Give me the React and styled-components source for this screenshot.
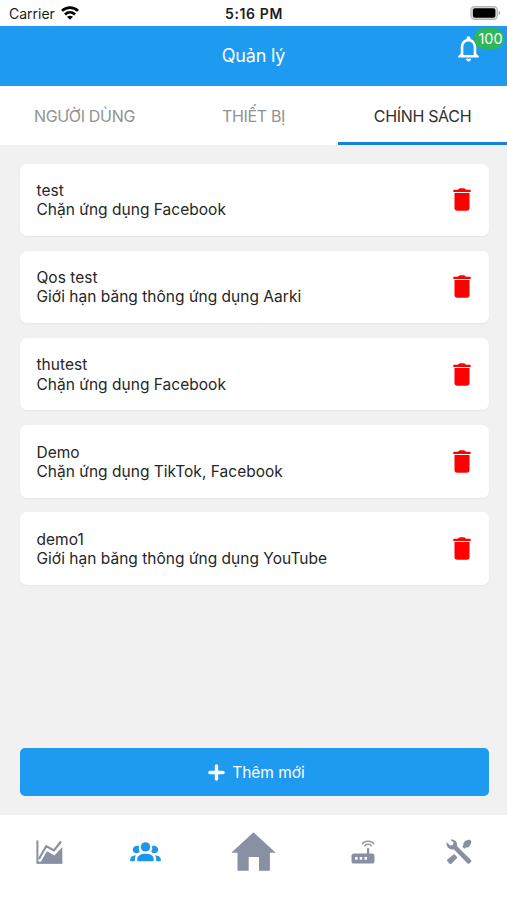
import React, { useState } from 'react';
import styled, { createGlobalStyle } from 'styled-components';
import { MdNotificationsNone } from 'react-icons/md';

const tabs = ['NGƯỜI DÙNG', 'THIẾT BỊ', 'CHÍNH SÁCH'];

const policies = [
    { name: 'test', detail: 'Chặn ứng dụng Facebook' },
    { name: 'Qos test', detail: 'Giới hạn băng thông ứng dụng Aarki' },
    { name: 'thutest', detail: 'Chặn ứng dụng Facebook' },
    { name: 'Demo', detail: 'Chặn ứng dụng TikTok, Facebook' },
    { name: 'demo1', detail: 'Giới hạn băng thông ứng dụng YouTube' },
];

const WifiIcon = () => (
    <svg width="18" height="14" viewBox="0 0 18 14" fill="none" stroke="#000" strokeWidth="2.7">
        <path d="M1 4.9C5.4.6 12.6.6 17 4.9" />
        <path d="M4 8.4c2.9-2.7 7.1-2.7 10 0" />
        <path d="M9 13.8 6 10.8c1.7-1.5 4.3-1.5 6 0z" fill="#000" stroke="none" />
    </svg>
);

const BatteryIcon = () => (
    <svg width="31" height="14" viewBox="0 0 31 14">
        <rect x=".9" y=".6" width="26.5" height="12.8" rx="3.6" fill="#ddd" stroke="#b5b5b5" strokeWidth="1.1" />
        <rect x="2.9" y="2.3" width="22.5" height="9.4" rx="2" fill="#000" />
        <path d="M28.7 4.8c2 .7 2 3.7 0 4.4z" fill="#a5a5a5" />
    </svg>
);

const TrashIcon = () => (
    <svg width="18" height="23" viewBox="0 0 18 23" fill="#fe0000">
        <path d="M.3 2.4Q.3 1.7 1 1.7h3.9Q6.2.3 7.8.3h2.4q1.6 0 2.9 1.4H17q.7 0 .7.7v1.7H.3z" />
        <path d="M1.5 5h15v15.3q0 2.4-2.4 2.4H3.9q-2.4 0-2.4-2.4z" />
    </svg>
);

const PlusIcon = () => (
    <svg width="17" height="17" viewBox="0 0 17 17" stroke="#fff" strokeWidth="3.4" strokeLinecap="round">
        <path d="M8.5 1.9v13.2M1.9 8.5h13.2" />
    </svg>
);

const ChartIcon = () => (
    <svg width="27" height="24" viewBox="0 0 27 24">
        <path d="M4.4 21.6 10.7 11l7.7 4.4L26.3 7v16.4H1z" fill="currentColor" />
        <path d="M1.4.5v22.3h24.9" fill="none" stroke="currentColor" strokeWidth="2" />
        <path d="m3 19 7.3-12.7 7.7 4.1L25 1.5" fill="none" stroke="currentColor" strokeWidth="2.3" />
        <path d="m4.1 21.2 6.6-11.7 7.6 4.1L26.3 4.8" fill="none" stroke="#fff" strokeWidth="1.8" />
    </svg>
);

const UsersIcon = () => (
    <svg width="31" height="20" viewBox="0 0 31 20" fill="currentColor">
        <circle cx="15.5" cy="4.9" r="4.7" />
        <path d="M7.3 19.2v-2.4c0-3 3.3-5.1 8.2-5.1s8.2 2.1 8.2 5.1v2.4z" />
        <path d="M9 3.9C6 3 2.7 4.9 2.7 7.5c0 2.2 1.7 3.7 3.8 3.7 1.4 0 2.5-.6 3.2-1.5A7.2 7.2 0 0 1 9 3.9z" />
        <path d="M22 3.9c3-.9 6.3 1 6.3 3.6 0 2.2-1.7 3.7-3.8 3.7-1.4 0-2.5-.6-3.2-1.5A7.2 7.2 0 0 0 22 3.9z" />
        <path d="M5.9 13.2c-3.4.3-5.7 2-5.7 4v2h4.7v-2.5c0-1.3.3-2.5 1-3.5zM25.1 13.2c3.4.3 5.7 2 5.7 4v2h-4.7v-2.5c0-1.3-.3-2.5-1-3.5z" />
    </svg>
);

const HomeIcon = () => (
    <svg width="45" height="39" viewBox="0 0 45 39" fill="currentColor">
        <path d="M22.5.3 44.7 20.7h-5.8v18H28V24.9H17.7v13.8H6.5v-18H.3z" />
    </svg>
);

const RouterIcon = () => (
    <svg width="24" height="24" viewBox="0 0 24 24">
        <path
            d="M16 8.2h2.2v5.2h2.7q2.6 0 2.6 2.6v4.9q0 2.6-2.6 2.6H3.1Q.5 23.5.5 20.9V16q0-2.6 2.6-2.6H16z"
            fill="currentColor"
        />
        <path d="M4 17.1h2.6v2.7H4zM8.7 17.1h2.6v2.7H8.7zM13.4 17.1H16v2.7h-2.6z" fill="#fff" />
        <path d="M11 4.1c3.1-4 9.1-4 12.2 0M13.4 6c2-2.5 5.4-2.5 7.4 0" fill="none" stroke="currentColor" strokeWidth="1.3" />
    </svg>
);

const ToolsIcon = () => (
    <svg width="26" height="26" viewBox="0 0 26 26" fill="currentColor">
        <path d="M4.1.8c2.7-.9 5.8.5 6.7 3.2.3 1 .3 2 .1 2.9l14.1 14q.9.9 0 1.8l-1.6 1.7q-.9.9-1.8 0L7.7 10.2c-3.3.9-6.8-1.2-7.2-4.9-.1-.7 0-1.4.2-2.1l3.5 3.4 2.7-.6.7-2.7z" />
        <path d="m8.2 15.1 3.3 3.3-5.8 6c-.7.7-1.6.7-2.3 0l-1.8-1.8c-.7-.7-.7-1.6 0-2.3z" />
        <path d="m16.2 7.5 1.2-1.5c-.3-1.8 1-3.7 2.7-4.4 1.3-.6 2.8-1.1 3.9-.9l1.2 1.2c.2 1.2-.2 2.7-.9 4-.8 1.8-2.6 3-4.4 2.6l-1.5 1.2z" />
    </svg>
);

const navItems = [
    { id: 'stats', Icon: ChartIcon },
    { id: 'manage', Icon: UsersIcon },
    { id: 'home', Icon: HomeIcon },
    { id: 'devices', Icon: RouterIcon },
    { id: 'tools', Icon: ToolsIcon },
];

export default function App() {
    const [activeTab, setActiveTab] = useState(2);
    const [activeNav, setActiveNav] = useState('manage');

    return (
        <Screen>
            <GlobalStyle />
            <StatusBar>
                <Carrier>
                    Carrier
                    <WifiIcon />
                </Carrier>
                <Clock>5:16 PM</Clock>
                <BatteryIcon />
            </StatusBar>
            <Header>
                <Title>Quản lý</Title>
                <BellButton>
                    <MdNotificationsNone />
                    <Badge>100</Badge>
                </BellButton>
            </Header>
            <TabBar>
                {tabs.map((tab, index) => (
                    <Tab key={tab} $active={index === activeTab} onClick={() => setActiveTab(index)}>
                        {tab}
                    </Tab>
                ))}
            </TabBar>
            <Content>
                <PolicyList>
                    {policies.map((policy) => (
                        <PolicyCard key={policy.name}>
                            <div>
                                <PolicyText>{policy.name}</PolicyText>
                                <PolicyText>{policy.detail}</PolicyText>
                            </div>
                            <DeleteButton>
                                <TrashIcon />
                            </DeleteButton>
                        </PolicyCard>
                    ))}
                </PolicyList>
                <AddButton>
                    <PlusIcon />
                    Thêm mới
                </AddButton>
            </Content>
            <BottomNav>
                {navItems.map(({ id, Icon }) => (
                    <NavItem key={id} $active={id === activeNav} onClick={() => setActiveNav(id)}>
                        <Icon />
                    </NavItem>
                ))}
            </BottomNav>
        </Screen>
    );
}

const GlobalStyle = createGlobalStyle`
    * {
        box-sizing: border-box;
    }

    body {
        margin: 0;
        font-family: Inter, 'Noto Sans', sans-serif;
    }

    button {
        border: 0;
        padding: 0;
        background: none;
        font-family: inherit;
        cursor: pointer;
    }

    svg {
        display: block;
        flex-shrink: 0;
    }
`;

const Screen = styled.div`
    display: flex;
    flex-direction: column;
    width: 100%;
    height: 900px;
    background-color: #f1f1f1;
    overflow: hidden;
`;

const StatusBar = styled.div`
    display: grid;
    grid-template-columns: 1fr auto 1fr;
    align-items: center;
    height: 25.5px;
    padding: 1px 6px 0 9px;
    background-color: #fff;
    color: #1c1c1c;

    > svg {
        justify-self: end;
    }
`;

const Carrier = styled.div`
    display: flex;
    align-items: center;
    gap: 6px;
    font-size: 14px;
`;

const Clock = styled.div`
    margin-right: 2px;
    padding-top: 1px;
    font-size: 14px;
    font-weight: 600;
    letter-spacing: 0.6px;
`;

const Header = styled.header`
    position: relative;
    display: flex;
    align-items: center;
    justify-content: center;
    height: 60.5px;
    background-color: #1e9af0;
    color: #fff;
`;

const Title = styled.h1`
    margin: 0;
    font-size: 18px;
    font-weight: 400;
    letter-spacing: -0.2px;
`;

const BellButton = styled.button`
    position: absolute;
    top: 7px;
    right: 23px;
    color: #fff;
    font-size: 31px;
`;

const Badge = styled.span`
    position: absolute;
    top: -5px;
    left: 21px;
    width: 30px;
    height: 21px;
    border-radius: 11px;
    background-color: #2fb65a;
    font-size: 14.5px;
    line-height: 21px;
    text-indent: 3px;
    text-align: center;
`;

const TabBar = styled.nav`
    display: grid;
    grid-template-columns: repeat(3, 1fr);
    height: 59px;
    background-color: #fff;
`;

const Tab = styled.button`
    border-bottom: 3px solid ${({ $active }) => ($active ? '#1780dc' : 'transparent')};
    padding: 3px 0 0;
    color: ${({ $active }) => ($active ? '#303030' : '#929292')};
    font-size: 16px;
    letter-spacing: -0.32px;
`;

const Content = styled.main`
    flex: 1;
    display: flex;
    flex-direction: column;
    justify-content: space-between;
    padding: 18.5px 18.5px 18.5px 19.5px;
`;

const PolicyList = styled.div`
    display: flex;
    flex-direction: column;
    gap: 14.7px;
`;

const PolicyCard = styled.div`
    display: flex;
    align-items: center;
    justify-content: space-between;
    height: 72.5px;
    padding: 0 18px 0 17px;
    border-radius: 7px;
    background-color: #fff;
    box-shadow: 0 1px 2px rgba(0, 0, 0, 0.05);
`;

const PolicyText = styled.p`
    margin: 0;
    padding-top: 1px;
    color: #262626;
    font-size: 15.5px;
    line-height: 18.3px;
    letter-spacing: 0.02px;

    &:first-child {
        padding-top: 2px;
    }
`;

const DeleteButton = styled.button`
    flex-shrink: 0;
`;

const AddButton = styled.button`
    display: flex;
    align-items: center;
    justify-content: center;
    gap: 7px;
    height: 48.5px;
    padding: 1px 0 0 5px;
    border-radius: 5px;
    background-color: #1e9af0;
    color: #fff;
    font-size: 15.5px;
`;

const BottomNav = styled.nav`
    display: grid;
    grid-template-columns: 98fr 95fr 121fr 97fr 95fr;
    height: 85.5px;
    padding: 0 1px 11px 0;
    background-color: #fff;
`;

const NavItem = styled.button`
    display: flex;
    align-items: center;
    justify-content: center;
    color: ${({ $active }) => ($active ? '#1e96ee' : '#8990a3')};
`;
